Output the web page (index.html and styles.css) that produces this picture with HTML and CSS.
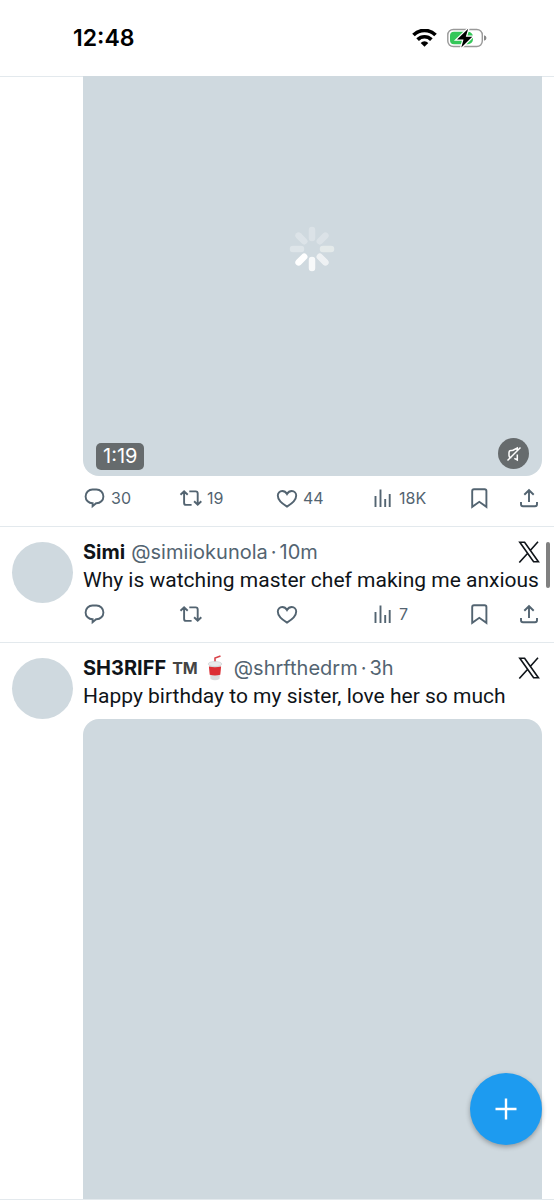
FILE: index.html
```html
<!DOCTYPE html>
<html lang="en">
<head>
<meta charset="utf-8">
<meta name="viewport" content="width=device-width, initial-scale=1">
<title>Timeline</title>
<link rel="stylesheet" href="styles.css">
</head>
<body>
<svg class="sprite" aria-hidden="true">
  <symbol id="reply" viewBox="0 0 24 24"><path d="M9.500 3.500h4a6.900 6.900 0 0 1 0 13.800h-.4l-3.500 3v-3h-.1a6.900 6.900 0 0 1 0-13.800z"/></symbol>
  <symbol id="repost" viewBox="0 0 24 24"><path d="M1.500 8.800 5.100 5.300l3.600 3.500M5.100 5.500v11.400q0 2 2 2h5.500M10.300 5.400h6.400q2 0 2 2v11.200M15.100 15.300l3.600 3.500 3.600-3.500"/></symbol>
  <symbol id="like" viewBox="0 0 24 24"><path d="M12 20.600C7.500 18 2.800 13.700 2.800 9.600 2.800 6.900 4.700 5 7.200 5c2 0 3.700 1 4.800 3 1.100-2 2.800-3 4.800-3 2.500 0 4.400 1.900 4.400 4.600 0 4.100-4.700 8.400-9.200 11z"/></symbol>
  <symbol id="views" viewBox="0 0 24 24"><path d="M4.500 10v11M9.500 3.500V21M14.200 13v8M18.700 8v13"/></symbol>
  <symbol id="bookmark" viewBox="0 0 24 24"><path d="M5.200 20.800V5q0-1.800 1.800-1.800h10.600q1.800 0 1.800 1.800v15.800l-7.100-5z"/></symbol>
  <symbol id="share" viewBox="0 0 24 24"><path d="M12 16V4.500M7.300 8.800 12 4.200l4.700 4.600M4 16v2.200q0 2 2 2h12q2 0 2-2V16"/></symbol>
  <symbol id="xlogo" viewBox="0 0 22 22"><path d="M1.800 1.300h4.800l13.800 19.400h-4.800zM20 .8l-8.200 9.200M9.700 12.200 1.300 21.500"/></symbol>
</svg>

<header class="status">
  <time class="clock">12:48</time>
  <div class="indicators">
    <svg class="wifi" viewBox="0 0 25 18" aria-label="Wi-Fi"><g fill="none" stroke="#000" stroke-width="3.700"><path d="M1.500 6a15.600 15.600 0 0 1 22 0"/><path d="M5.600 10.600a9.800 9.800 0 0 1 13.800 0"/></g><path d="M12.500 17.700 8.700 13.900a5.400 5.400 0 0 1 7.600 0z"/></svg>
    <svg class="battery" viewBox="0 0 40 20" aria-label="Battery charging"><rect x=".8" y="1.500" width="34.500" height="17" rx="5.500" fill="#fff" stroke="#999" stroke-width="1.400"/><path d="M7 3.700h14a5 5 0 0 1 5 5v2.600a5 5 0 0 1-5 5H7a4 4 0 0 1-4-4V7.700a4 4 0 0 1 4-4z" fill="#34c759"/><path d="M37 7.300q2.500.7 2.500 2.700T37 12.700z" fill="#888"/><path d="M21.200.8 10 11.600h6.500l-2.200 8L25.300 8.700h-6.500z" stroke="#fff" stroke-width="2.500" paint-order="stroke"/></svg>
  </div>
</header>

<main class="feed">
  <article class="post post-cont">
    <div class="gutter"></div>
    <div class="content">
      <div class="media video">
        <svg class="spinner" viewBox="-24 -24 48 48" aria-label="Loading">
          <g stroke="#fff" stroke-width="6.500" stroke-linecap="round">
            <path d="M0-11v-8" opacity=".25"/><path d="M7.800-7.800l5.600-5.600" opacity=".25"/><path d="M11 0h8" stroke="#eef2f0" opacity=".7"/><path d="M7.800 7.800l5.600 5.600" opacity=".65"/><path d="M0 11v8" opacity=".85"/><path d="M-7.800 7.800l-5.600 5.600"/><path d="M-11 0h-8" opacity=".32"/><path d="M-7.800-7.800l-5.600-5.600" opacity=".28"/>
          </g>
        </svg>
        <span class="duration">1:19</span>
        <button class="mute" aria-label="Unmute"><svg viewBox="0 0 18 18"><path d="M7.500 5.500H6q-2 0-2 2v3q0 2 2 2h.5M7.500 5.500 12.300 3v3M12.300 9.500V15l-3-1.700M2.500 15.500l13-13"/></svg></button>
      </div>
      <div class="actions">
        <button aria-label="Reply"><svg><use href="#reply"/></svg>30</button>
        <button aria-label="Repost"><svg><use href="#repost"/></svg>19</button>
        <button aria-label="Like"><svg><use href="#like"/></svg>44</button>
        <button aria-label="Views"><svg><use href="#views"/></svg>18K</button>
        <button aria-label="Bookmark"><svg><use href="#bookmark"/></svg></button>
        <button aria-label="Share"><svg><use href="#share"/></svg></button>
      </div>
    </div>
  </article>

  <article class="post">
    <div class="gutter"><div class="avatar"></div></div>
    <div class="content">
      <div class="byline"><strong>Simi</strong><span class="meta">@simiiokunola<span class="dot">·</span>10m</span><svg class="xlogo" aria-label="X"><use href="#xlogo"/></svg></div>
      <p class="text">Why is watching master chef making me anxious</p>
      <div class="actions">
        <button aria-label="Reply"><svg><use href="#reply"/></svg></button>
        <button aria-label="Repost"><svg><use href="#repost"/></svg></button>
        <button aria-label="Like"><svg><use href="#like"/></svg></button>
        <button aria-label="Views"><svg><use href="#views"/></svg>7</button>
        <button aria-label="Bookmark"><svg><use href="#bookmark"/></svg></button>
        <button aria-label="Share"><svg><use href="#share"/></svg></button>
      </div>
    </div>
  </article>

  <article class="post post-open">
    <div class="gutter"><div class="avatar"></div></div>
    <div class="content">
      <div class="byline"><strong>SH3RIFF</strong><span class="tm">TM</span>
        <svg class="cup" viewBox="0 0 16 26" aria-label="Cup with straw"><path d="M8 7V3L13.500 1" fill="none" stroke="#d9434a" stroke-width="1.600"/><path d="M2.200 9h11.600l-1.300 15q-4.500 2.500-9 0z" fill="#d9dcde"/><path d="M1.900 11.500q6.100 1.500 12.200 0l-.8 8.300q-5.300 1.500-10.600 0z" fill="#dc2f35"/><ellipse cx="8" cy="9" rx="6.800" ry="2.500" fill="#e9ebec" stroke="#c9cdd0" stroke-width=".6"/></svg>
        <span class="meta">@shrfthedrm<span class="dot">·</span>3h</span><svg class="xlogo" aria-label="X"><use href="#xlogo"/></svg></div>
      <p class="text">Happy birthday to my sister, love her so much</p>
      <div class="media photo"></div>
    </div>
  </article>
</main>

<div class="scrollbar"></div>
<button class="compose" aria-label="New post"><svg viewBox="0 0 22 22"><path d="M11 .5v21M.5 11h21"/></svg></button>
</body>
</html>
```

FILE: styles.css
```css
* { box-sizing: border-box; }
body {
  margin: 0;
  min-height: 100vh;
  display: flex;
  flex-direction: column;
  background: #fff;
  color: #0f1419;
  font-family: Inter, "Liberation Sans", sans-serif;
  font-size: 20px;
  line-height: 28px;
}
button {
  border: 0;
  padding: 0;
  background: none;
  color: inherit;
  font: inherit;
  cursor: pointer;
}
.sprite { position: absolute; width: 0; height: 0; }

.status {
  height: 76px;
  padding: 0 67px 0 73px;
  display: flex;
  justify-content: space-between;
  align-items: center;
  box-shadow: 0 1px 0 #e3e9ed;
}
.clock { font: 600 23px/28px Inter, sans-serif; color: #000; }
.indicators { display: flex; align-items: center; gap: 10px; }
.wifi { width: 25px; height: 18px; }
.battery { width: 40px; height: 20px; }

.feed { flex: 1; display: flex; flex-direction: column; }
.post {
  display: flex;
  gap: 10px;
  padding: 11px 12px 16px;
  border-bottom: 1px solid #e3e9ed;
}
.post-cont { padding-top: 0; }
.post-open { flex: 1; padding-bottom: 0; }
.gutter { flex: none; width: 61px; padding-top: 4px; }
.avatar { height: 61px; border-radius: 50%; background: #cfd9df; }
.content { flex: 1; min-width: 0; display: flex; flex-direction: column; }

.byline { display: flex; align-items: center; gap: 6px; white-space: nowrap; }
.byline strong { font-weight: 700; }
.meta { color: #536471; }
.dot { margin: 0 3px; }
.tm { font: 700 16px/28px Inter, sans-serif; color: #444; }
.cup { width: 16px; height: 26px; margin: 0 5px 0 3px; }
.xlogo {
  width: 22px;
  height: 22px;
  margin-left: auto;
  margin-right: 2px;
  fill: none;
  stroke: #0f1419;
  stroke-width: 1.6;
}
.text { margin: 0; font-family: Roboto, "Liberation Sans", sans-serif; font-size: 21px; }

.media { position: relative; background: #cfd9df; }
.video { height: 400px; border-radius: 0 0 16px 16px; }
.spinner { position: absolute; left: 50%; top: 149px; width: 48px; height: 48px; margin-left: -25px; }
.duration {
  position: absolute;
  left: 13px;
  bottom: 6px;
  padding: 0 7px;
  border-radius: 5px;
  background: #666b6d;
  color: #fff;
  font: 20px/27px Inter, sans-serif;
}
.mute {
  position: absolute;
  right: 13px;
  bottom: 7px;
  width: 31px;
  height: 31px;
  border-radius: 50%;
  background: #666b6d;
  display: grid;
  place-items: center;
}
.mute svg { width: 18px; height: 18px; fill: none; stroke: #fff; stroke-width: 1.5; }
.photo { flex: 1; margin-top: 9px; border-radius: 16px 16px 0 0; }

.actions {
  display: grid;
  grid-template-columns: repeat(4, 1fr) 50px 24px;
  margin-top: 8px;
  padding-right: 1px;
  color: #536471;
  font: 16px/24px Inter, sans-serif;
}
.post-cont .actions { margin-top: 10px; }
.actions button { display: flex; align-items: center; gap: 4px; }
.actions svg {
  width: 24px;
  height: 24px;
  flex: none;
  fill: none;
  stroke: #536471;
  stroke-width: 1.9;
}

.scrollbar {
  position: fixed;
  right: 4px;
  top: 542px;
  width: 4px;
  height: 46px;
  border-radius: 2px;
  background: #808080;
}
.compose {
  position: fixed;
  right: 12px;
  bottom: 55px;
  width: 72px;
  height: 72px;
  border-radius: 50%;
  background: #1d9bf0;
  box-shadow: 0 2px 5px rgba(0, 0, 0, .3);
  display: grid;
  place-items: center;
}
.compose svg { width: 22px; height: 22px; stroke: #fff; stroke-width: 2.4; }
```
